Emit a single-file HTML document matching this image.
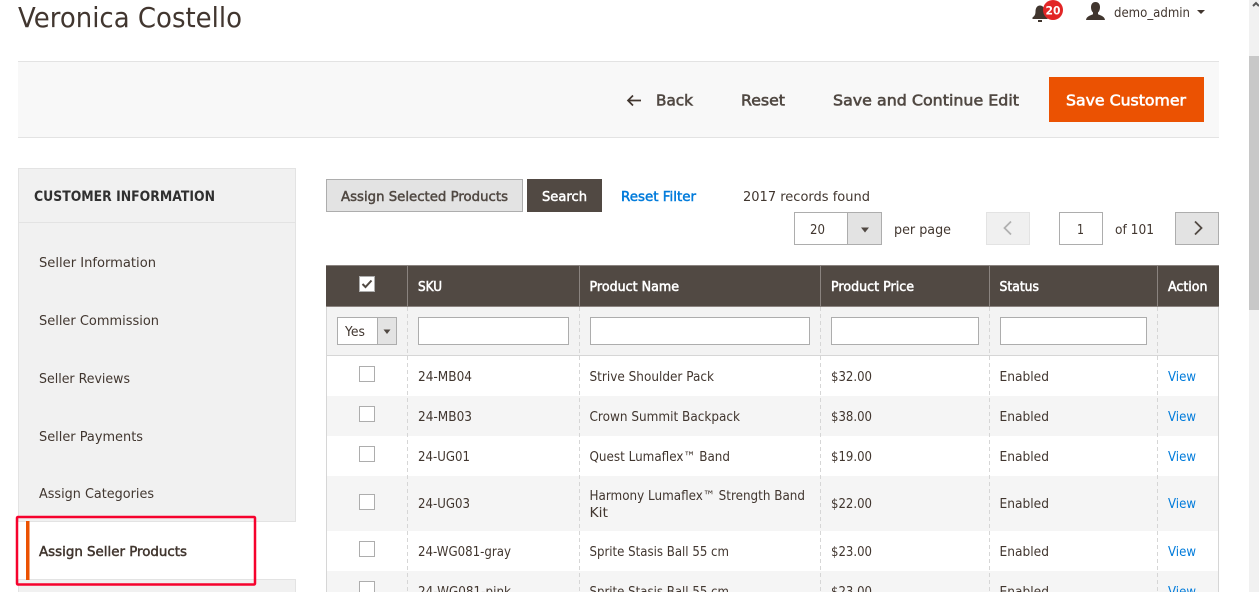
<!DOCTYPE html>
<html><head><meta charset="utf-8"><style>
html,body{margin:0;padding:0;background:#fff;width:1259px;height:592px;overflow:hidden}
svg{display:block}
text{font-family:"DejaVu Sans","Liberation Sans",sans-serif;font-size:13px;fill:#41362f}
.b{font-weight:bold}
.s{stroke:#41362f;stroke-width:.5px;font-size:13.500px}
.btn{font-size:15.500px;fill:#514943;stroke:#514943;stroke-width:.6px}
.l{fill:#007bdb}
.th{font-size:13px;fill:#fff;stroke:#fff;stroke-width:.55px}
.n{font-size:13.500px}
</style></head><body>
<svg width="1259" height="592" viewBox="0 0 1259 592" xmlns="http://www.w3.org/2000/svg">
<rect x="1249" y="0" width="10" height="592" fill="#f1f1f1"/>
<rect x="1249" y="56" width="10" height="254" fill="#c8c8c8"/>
<path d="M1253 6l3-3 3 3" fill="none" stroke="#555" stroke-width="2"/>

<text x="18" y="27" textLength="224" lengthAdjust="spacingAndGlyphs" style="font-size:28px">Veronica Costello</text>

<!-- bell / badge -->
<path d="M1040 5.500c3 0 4.500 2.500 4.500 6 0 3 1 4.500 3 6v1.500h-15v-1.500c2-1.500 3-3 3-6 0-3.500 1.500-6 4.500-6z" fill="#41362f"/>
<rect x="1038" y="20" width="4" height="2" fill="#41362f"/>
<circle cx="1053" cy="10" r="10" fill="#e22626"/>
<text x="1045.500" y="14.500" textLength="15" lengthAdjust="spacingAndGlyphs" class="b" style="font-size:11.500px;fill:#fff">20</text>
<!-- user -->
<path d="M1095.500 2c3 0 4.500 2.200 4.500 5.200 0 2.300-.8 4.300-2 5.300v1.800c2 1 6.500 1.800 7 5.700h-19c.5-3.900 5-4.700 7-5.700v-1.800c-1.200-1-2-3-2-5.300 0-3 1.500-5.200 4.500-5.200z" fill="#41362f"/>
<text x="1114" y="17" textLength="76" lengthAdjust="spacingAndGlyphs">demo_admin</text>
<path d="M1197 10h8l-4 4z" fill="#41362f"/>

<!-- action bar -->
<rect x="18" y="61.500" width="1201" height="76" fill="#f8f8f8"/>
<path d="M18 61.500h1201M18 137.500h1201" stroke="#e3e3e3"/>
<path d="M641 100.500h-12.500M633 95.500l-5 5 5 5" fill="none" stroke="#41362f" stroke-width="1.700"/>
<text x="656" y="105.500" textLength="37" lengthAdjust="spacingAndGlyphs" class="btn">Back</text>
<text x="741" y="105.500" textLength="44" lengthAdjust="spacingAndGlyphs" class="btn">Reset</text>
<text x="833" y="105.500" textLength="186" lengthAdjust="spacingAndGlyphs" class="btn">Save and Continue Edit</text>
<rect x="1049" y="77" width="155" height="45" fill="#eb5202"/>
<text x="1066" y="105.500" textLength="120" lengthAdjust="spacingAndGlyphs" class="btn" style="fill:#fff;stroke:#fff">Save Customer</text>

<!-- sidebar -->
<rect x="18.500" y="168.500" width="277" height="353" fill="#f1f1f1" stroke="#e3e3e3"/>
<path d="M19 222.500h276" stroke="#e3e3e3"/>
<text x="34" y="201" textLength="181" lengthAdjust="spacingAndGlyphs" class="b" style="font-size:14px;fill:#303030">CUSTOMER INFORMATION</text>
<text x="39" y="267" textLength="117" lengthAdjust="spacingAndGlyphs" class="n">Seller Information</text>
<text x="39" y="325" textLength="120" lengthAdjust="spacingAndGlyphs" class="n">Seller Commission</text>
<text x="39" y="383" textLength="91" lengthAdjust="spacingAndGlyphs" class="n">Seller Reviews</text>
<text x="39" y="441" textLength="104" lengthAdjust="spacingAndGlyphs" class="n">Seller Payments</text>
<text x="39" y="498" textLength="115" lengthAdjust="spacingAndGlyphs" class="n">Assign Categories</text>
<rect x="18.500" y="579.500" width="277" height="20" fill="#f1f1f1" stroke="#e3e3e3"/>
<rect x="18" y="522" width="236" height="57" fill="#fff"/>
<rect x="26" y="521" width="3.500" height="59" fill="#eb5202"/>
<text x="39" y="556" textLength="148" lengthAdjust="spacingAndGlyphs" class="s">Assign Seller Products</text>
<rect x="17" y="517" width="238" height="67.500" rx="1" fill="none" stroke="#f6022d" stroke-width="2.500"/>

<!-- toolbar -->
<rect x="326.500" y="179.500" width="196" height="32" fill="#e3e3e3" stroke="#adadad"/>
<text x="341" y="201" textLength="167" lengthAdjust="spacingAndGlyphs" class="s" style="fill:#514943;stroke:#514943">Assign Selected Products</text>
<rect x="527" y="179" width="75" height="33" fill="#514943"/>
<text x="542" y="201" textLength="45" lengthAdjust="spacingAndGlyphs" class="s" style="fill:#fff;stroke:#fff">Search</text>
<text x="621" y="201" textLength="75" lengthAdjust="spacingAndGlyphs" class="s" style="fill:#007bdb;stroke:#007bdb">Reset Filter</text>
<text x="743" y="201" textLength="127" lengthAdjust="spacingAndGlyphs" class="n">2017 records found</text>

<rect x="794.500" y="212.500" width="87" height="32" fill="#fff" stroke="#adadad"/>
<rect x="847.500" y="213" width="33.500" height="31" fill="#e3e3e3"/>
<path d="M847.500 212.500v32" stroke="#adadad"/>
<path d="M861 227.500h8l-4 5z" fill="#514943"/>
<text x="810" y="234" textLength="15" lengthAdjust="spacingAndGlyphs" class="n">20</text>
<text x="894" y="234" textLength="57" lengthAdjust="spacingAndGlyphs" class="n">per page</text>
<rect x="986.500" y="212.500" width="43" height="32" fill="#f0f0f0" stroke="#e3e3e3"/>
<path d="M1011 221.500l-6.500 6.500 6.500 6.500" fill="none" stroke="#b0b0b0" stroke-width="1.800"/>
<rect x="1059.500" y="212.500" width="43" height="32" fill="#fff" stroke="#adadad"/>
<text x="1077" y="234" textLength="7" lengthAdjust="spacingAndGlyphs" class="n">1</text>
<text x="1115" y="234" textLength="39" lengthAdjust="spacingAndGlyphs" class="n">of 101</text>
<rect x="1175.500" y="212.500" width="43" height="32" fill="#e3e3e3" stroke="#adadad"/>
<path d="M1195 221.500l6.500 6.500-6.500 6.500" fill="none" stroke="#514943" stroke-width="1.800"/>

<!-- table backgrounds -->
<rect x="326" y="265" width="893" height="42" fill="#514943"/>
<rect x="326" y="307" width="893" height="49" fill="#f3f3f3"/>
<rect x="326" y="396" width="893" height="40" fill="#f5f5f5"/>
<rect x="326" y="476" width="893" height="55" fill="#f5f5f5"/>
<rect x="326" y="571" width="893" height="21" fill="#f5f5f5"/>
<path d="M326 265.500h893M326 306.500h893" stroke="#8a837f"/>
<path d="M326 355.500h893" stroke="#d6d6d6"/>
<path d="M326.500 307v285M1218.500 307v285" stroke="#d6d6d6"/>
<path d="M407.500 265v42M579.500 265v42M820.500 265v42M989.500 265v42M1157.500 265v42" stroke="#8a837f"/>
<path d="M407.500 307v285M579.500 307v285M820.500 307v285M989.500 307v285M1157.500 307v285" stroke="#d6d6d6" stroke-dasharray="4 3"/>

<!-- header -->
<rect x="359.500" y="276.500" width="15" height="15" fill="#fff" stroke="#adadad"/>
<path d="M362.500 284l3 3 6-6.500" fill="none" stroke="#514943" stroke-width="2"/>
<text x="418" y="291" textLength="24" lengthAdjust="spacingAndGlyphs" class="th">SKU</text>
<text x="589.500" y="291" textLength="89.500" lengthAdjust="spacingAndGlyphs" class="th">Product Name</text>
<text x="831" y="291" textLength="83" lengthAdjust="spacingAndGlyphs" class="th">Product Price</text>
<text x="999.500" y="291" textLength="39.500" lengthAdjust="spacingAndGlyphs" class="th">Status</text>
<text x="1168" y="291" textLength="39.500" lengthAdjust="spacingAndGlyphs" class="th">Action</text>

<!-- filters -->
<rect x="337.500" y="317.500" width="59" height="27" fill="#fff" stroke="#adadad"/>
<rect x="378" y="318" width="18" height="26" fill="#e3e3e3"/>
<path d="M377.500 317.500v27" stroke="#adadad"/>
<path d="M383.500 329.500h7l-3.500 4.500z" fill="#514943"/>
<text x="345" y="336" textLength="20" lengthAdjust="spacingAndGlyphs">Yes</text>
<rect x="418.500" y="317.500" width="150" height="27" fill="#fff" stroke="#adadad"/>
<rect x="590.500" y="317.500" width="219" height="27" fill="#fff" stroke="#adadad"/>
<rect x="831.500" y="317.500" width="147" height="27" fill="#fff" stroke="#adadad"/>
<rect x="1000.500" y="317.500" width="146" height="27" fill="#fff" stroke="#adadad"/>

<!-- checkboxes -->
<g fill="#fff" stroke="#adadad">
<rect x="359.500" y="366.500" width="15" height="15"/>
<rect x="359.500" y="406.500" width="15" height="15"/>
<rect x="359.500" y="446.500" width="15" height="15"/>
<rect x="359.500" y="494.500" width="15" height="15"/>
<rect x="359.500" y="541.500" width="15" height="15"/>
<rect x="359.500" y="581.500" width="15" height="15"/>
</g>

<!-- row 1 -->
<text x="418" y="381" textLength="54" lengthAdjust="spacingAndGlyphs">24-MB04</text>
<text x="589.500" y="381" textLength="124.500" lengthAdjust="spacingAndGlyphs">Strive Shoulder Pack</text>
<text x="831" y="381" textLength="41" lengthAdjust="spacingAndGlyphs">$32.00</text>
<text x="999.500" y="381" textLength="49.500" lengthAdjust="spacingAndGlyphs">Enabled</text>
<text x="1168" y="381" textLength="28" lengthAdjust="spacingAndGlyphs" class="l">View</text>
<!-- row 2 -->
<text x="418" y="421" textLength="54" lengthAdjust="spacingAndGlyphs">24-MB03</text>
<text x="589.500" y="421" textLength="150.500" lengthAdjust="spacingAndGlyphs">Crown Summit Backpack</text>
<text x="831" y="421" textLength="41" lengthAdjust="spacingAndGlyphs">$38.00</text>
<text x="999.500" y="421" textLength="49.500" lengthAdjust="spacingAndGlyphs">Enabled</text>
<text x="1168" y="421" textLength="28" lengthAdjust="spacingAndGlyphs" class="l">View</text>
<!-- row 3 -->
<text x="418" y="461" textLength="52" lengthAdjust="spacingAndGlyphs">24-UG01</text>
<text x="589.500" y="461" textLength="140.500" lengthAdjust="spacingAndGlyphs">Quest Lumaflex™ Band</text>
<text x="831" y="461" textLength="41" lengthAdjust="spacingAndGlyphs">$19.00</text>
<text x="999.500" y="461" textLength="49.500" lengthAdjust="spacingAndGlyphs">Enabled</text>
<text x="1168" y="461" textLength="28" lengthAdjust="spacingAndGlyphs" class="l">View</text>
<!-- row 4 -->
<text x="418" y="508" textLength="52" lengthAdjust="spacingAndGlyphs">24-UG03</text>
<text x="589.500" y="500" textLength="215.500" lengthAdjust="spacingAndGlyphs">Harmony Lumaflex™ Strength Band</text>
<text x="589.500" y="517" textLength="18.500" lengthAdjust="spacingAndGlyphs">Kit</text>
<text x="831" y="508" textLength="41" lengthAdjust="spacingAndGlyphs">$22.00</text>
<text x="999.500" y="508" textLength="49.500" lengthAdjust="spacingAndGlyphs">Enabled</text>
<text x="1168" y="508" textLength="28" lengthAdjust="spacingAndGlyphs" class="l">View</text>
<!-- row 5 -->
<text x="418" y="556" textLength="93" lengthAdjust="spacingAndGlyphs">24-WG081-gray</text>
<text x="589.500" y="556" textLength="139.500" lengthAdjust="spacingAndGlyphs">Sprite Stasis Ball 55 cm</text>
<text x="831" y="556" textLength="41" lengthAdjust="spacingAndGlyphs">$23.00</text>
<text x="999.500" y="556" textLength="49.500" lengthAdjust="spacingAndGlyphs">Enabled</text>
<text x="1168" y="556" textLength="28" lengthAdjust="spacingAndGlyphs" class="l">View</text>
<!-- row 6 -->
<text x="418" y="596" textLength="93" lengthAdjust="spacingAndGlyphs">24-WG081-pink</text>
<text x="589.500" y="596" textLength="139.500" lengthAdjust="spacingAndGlyphs">Sprite Stasis Ball 55 cm</text>
<text x="831" y="596" textLength="41" lengthAdjust="spacingAndGlyphs">$23.00</text>
<text x="999.500" y="596" textLength="49.500" lengthAdjust="spacingAndGlyphs">Enabled</text>
<text x="1168" y="596" textLength="28" lengthAdjust="spacingAndGlyphs" class="l">View</text>
</svg>
</body></html>
